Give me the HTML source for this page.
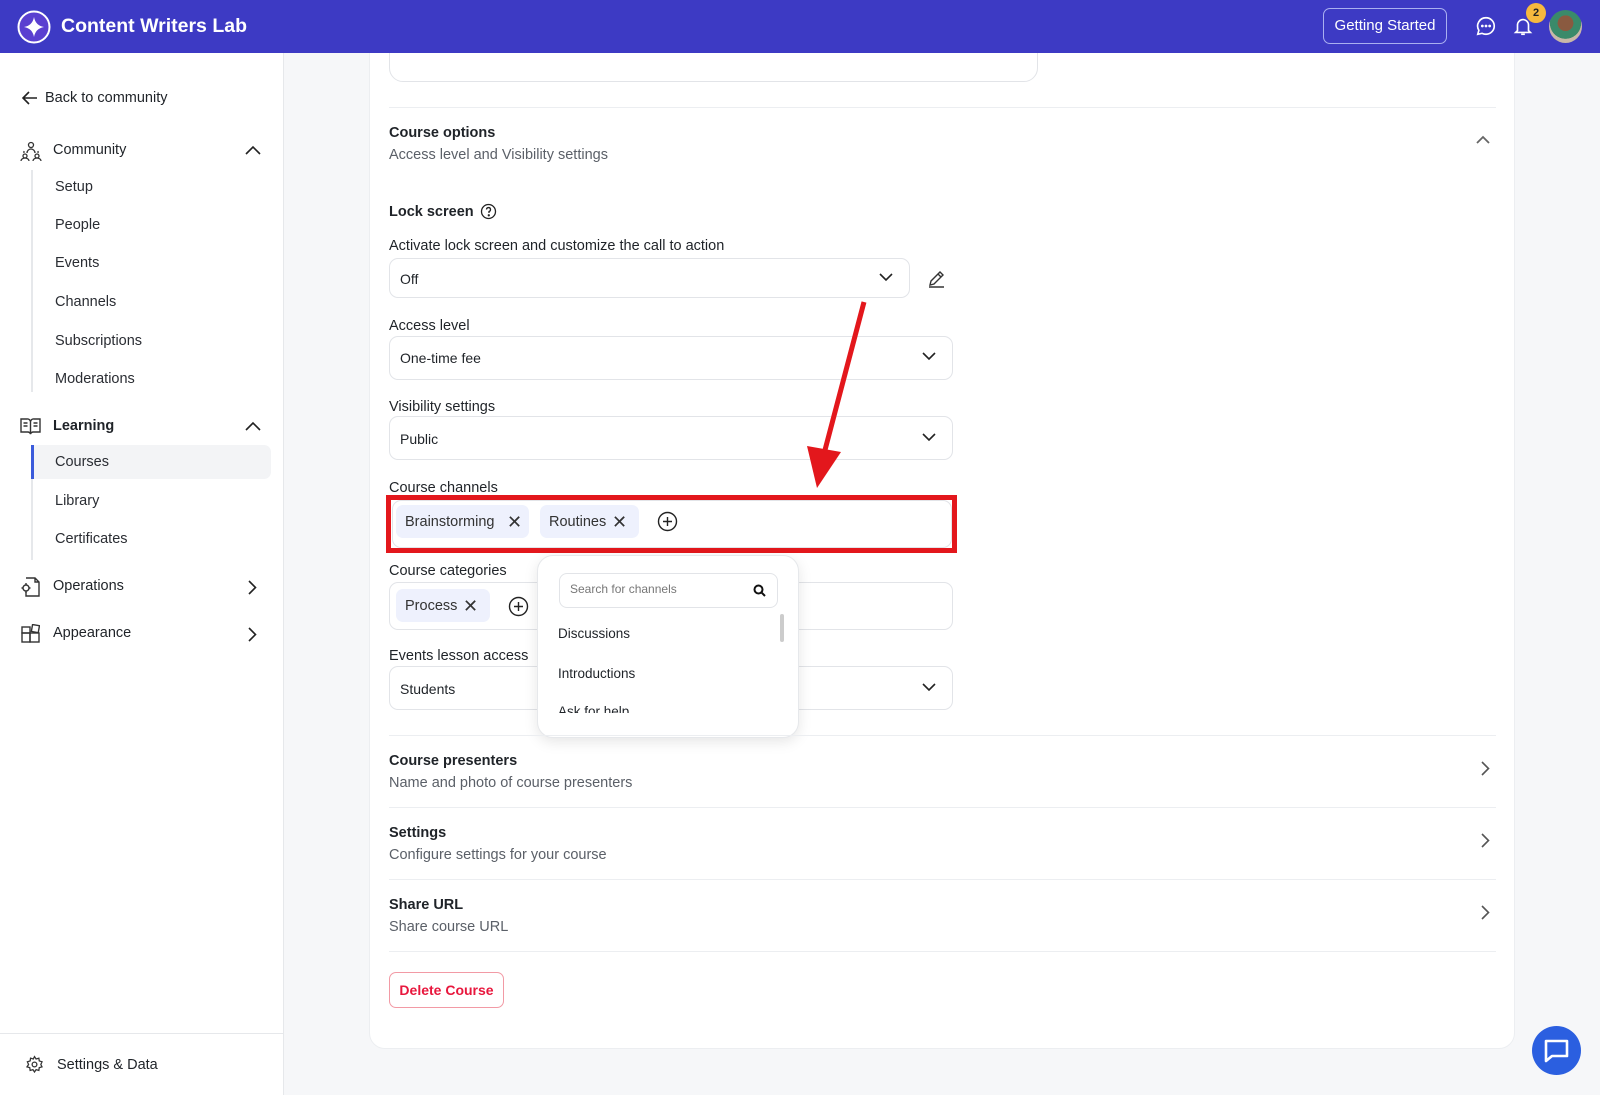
<!DOCTYPE html>
<html><head><meta charset="utf-8"><style>
*{box-sizing:border-box;margin:0;padding:0}
body{width:1600px;height:1095px;overflow:hidden;background:#f6f7f9;font-family:"Liberation Sans",sans-serif;color:#1f2328;font-size:14.5px;position:relative}
.abs{position:absolute}
.hdrwrap{position:absolute;left:0;top:0;width:1600px;height:53px;z-index:10;background:#3d3ac4}
.side{left:0;top:53px;width:284px;height:1042px;background:#fff;border-right:1px solid #e6e8eb}
.card{left:369px;top:30px;width:1146px;height:1019px;background:#fff;border:1px solid #eceef1;border-radius:16px}
.t{position:absolute;white-space:nowrap}
.sub{color:#5b6068}
.b{font-weight:bold}
.sel{position:absolute;border:1px solid #e2e4e8;border-radius:9px;background:#fff}
.hr{position:absolute;left:389px;width:1107px;height:1px;background:#eceef1}
.chip{position:absolute;background:#eef1fd;border-radius:7px;height:33px;line-height:33px;padding-left:9px;font-size:14.5px;color:#333}
.nav{position:absolute;left:55px;color:#2a2d33}
</style></head><body>
<div class="abs side"></div>
<svg class="abs" style="left:21px;top:90px" width="17" height="16" viewBox="0 0 17 16" fill="none" stroke="#222" stroke-width="1.6"><path d="M16 8H2M8 2L2 8l6 6"/></svg>
<div class="t" style="left:45px;top:90px">Back to community</div>
<svg class="abs" style="left:20px;top:140px" width="22" height="22" viewBox="0 0 22 22" fill="none" stroke="#333" stroke-width="1.3"><circle cx="11" cy="5" r="2.5"/><path d="M7 13a4 4 0 0 1 8 0"/><circle cx="5" cy="16" r="2"/><circle cx="17" cy="16" r="2"/><path d="M1 21a4 3 0 0 1 8 0M13 21a4 3 0 0 1 8 0M4 11a7 7 0 0 0 0 2M18 11a7 7 0 0 1 0 2"/></svg>
<div class="t" style="left:53px;top:142px">Community</div>
<svg class="abs" style="left:245px;top:145px" width="16" height="10" viewBox="0 0 16 10" fill="none" stroke="#222" stroke-width="1.6"><path d="M1 9l7-7 7 7"/></svg>
<div class="abs" style="left:31px;top:170px;width:2px;height:222px;background:#e6e8eb"></div>
<div class="nav t" style="top:179px">Setup</div>
<div class="nav t" style="top:217px">People</div>
<div class="nav t" style="top:255px">Events</div>
<div class="nav t" style="top:294px">Channels</div>
<div class="nav t" style="top:333px">Subscriptions</div>
<div class="nav t" style="top:371px">Moderations</div>
<svg class="abs" style="left:20px;top:417px" width="21" height="18" viewBox="0 0 21 18" fill="none" stroke="#333" stroke-width="1.4"><path d="M1 2h6a3 3 0 0 1 3.5 3v12a3 3 0 0 0-3-2H1zM20 2h-6a3 3 0 0 0-3.5 3v12a3 3 0 0 1 3-2H20z"/><path d="M3.5 6h4M3.5 9h4M13.5 6h4M13.5 9h4"/></svg>
<div class="t b" style="left:53px;top:418px">Learning</div>
<svg class="abs" style="left:245px;top:421px" width="16" height="10" viewBox="0 0 16 10" fill="none" stroke="#222" stroke-width="1.6"><path d="M1 9l7-7 7 7"/></svg>
<div class="abs" style="left:31px;top:445px;width:2px;height:115px;background:#e6e8eb"></div>
<div class="abs" style="left:31px;top:445px;width:240px;height:34px;background:#f3f4f6;border-radius:0 7px 7px 0;border-left:3px solid #3b5bdb"></div>
<div class="nav t" style="top:454px">Courses</div>
<div class="nav t" style="top:493px">Library</div>
<div class="nav t" style="top:531px">Certificates</div>
<svg class="abs" style="left:21px;top:577px" width="19" height="20" viewBox="0 0 19 20" fill="none" stroke="#333" stroke-width="1.4"><path d="M5 1h9l4 4v14H5v-4M14 1v4h4"/><circle cx="5" cy="11" r="3"/><path d="M5 6v1.5M5 14.5V16M0.5 11H2M8 11h1.5"/></svg>
<div class="t" style="left:53px;top:578px">Operations</div>
<svg class="abs" style="left:248px;top:580px" width="9" height="15" viewBox="0 0 9 15" fill="none" stroke="#222" stroke-width="1.6"><path d="M1 1l6.5 6.5L1 14"/></svg>
<svg class="abs" style="left:21px;top:624px" width="19" height="19" viewBox="0 0 19 19" fill="none" stroke="#333" stroke-width="1.4"><rect x="1" y="9" width="8" height="9"/><rect x="9" y="9" width="9" height="9"/><rect x="1" y="3" width="8" height="6"/><rect x="11" y="1" width="7" height="7" transform="rotate(10 14 4)"/></svg>
<div class="t" style="left:53px;top:625px">Appearance</div>
<svg class="abs" style="left:248px;top:627px" width="9" height="15" viewBox="0 0 9 15" fill="none" stroke="#222" stroke-width="1.6"><path d="M1 1l6.5 6.5L1 14"/></svg>
<div class="abs" style="left:0;top:1033px;width:284px;height:1px;background:#e6e8eb"></div>
<svg class="abs" style="left:25px;top:1055px" width="19" height="19" viewBox="0 0 24 24" fill="none" stroke="#333" stroke-width="1.6"><circle cx="12" cy="12" r="3"/><path d="M12 2l2 3 3.5-1 .5 3.5 3.5 1-1.5 3.5 1.5 3-3.5 1-.5 3.5-3.5-1-2 3-2-3-3.5 1-.5-3.5-3.5-1L4.5 12 3 8.5l3.5-1L7 4l3.5 1z"/></svg>
<div class="t" style="left:57px;top:1057px">Settings &amp; Data</div>

<div class="abs card"></div>
<div class="sel" style="left:389px;top:20px;width:649px;height:62px;border-radius:14px"></div>
<div class="hr" style="top:107px"></div>
<div class="t b" style="left:389px;top:125px;font-size:14.5px">Course options</div>
<div class="t sub" style="left:389px;top:147px">Access level and Visibility settings</div>
<svg class="abs" style="left:1476px;top:135px" width="14" height="9" viewBox="0 0 14 9" fill="none" stroke="#666" stroke-width="1.8"><path d="M1 8l6-6 6 6"/></svg>
<div class="t b" style="left:389px;top:204px">Lock screen</div>
<svg class="abs" style="left:480px;top:203px" width="17" height="17" viewBox="0 0 17 17" fill="none" stroke="#222" stroke-width="1.3"><circle cx="8.5" cy="8.5" r="7"/><path d="M6.5 6.5a2 2 0 1 1 2.5 2v1.5"/><circle cx="8.8" cy="12.3" r=".5" fill="#222"/></svg>
<div class="t" style="left:389px;top:238px">Activate lock screen and customize the call to action</div>
<div class="sel" style="left:389px;top:258px;width:521px;height:40px"></div>
<div class="t" style="left:400px;top:271px;font-size:14px">Off</div>
<svg class="abs" style="left:879px;top:273px" width="14" height="9" viewBox="0 0 14 9" fill="none" stroke="#222" stroke-width="1.6"><path d="M1 1l6 6 6-6"/></svg>
<svg class="abs" style="left:927px;top:269px" width="19" height="19" viewBox="0 0 19 19" fill="none" stroke="#333" stroke-width="1.4"><path d="M3 16l1-4L13 3l3 3-9 9zM11 5l3 3M2 18h15"/></svg>
<div class="t" style="left:389px;top:318px">Access level</div>
<div class="sel" style="left:389px;top:336px;width:564px;height:44px"></div>
<div class="t" style="left:400px;top:350px;font-size:14px">One-time fee</div>
<svg class="abs" style="left:922px;top:352px" width="14" height="9" viewBox="0 0 14 9" fill="none" stroke="#222" stroke-width="1.6"><path d="M1 1l6 6 6-6"/></svg>
<div class="t" style="left:389px;top:399px">Visibility settings</div>
<div class="sel" style="left:389px;top:416px;width:564px;height:44px"></div>
<div class="t" style="left:400px;top:431px;font-size:14px">Public</div>
<svg class="abs" style="left:922px;top:433px" width="14" height="9" viewBox="0 0 14 9" fill="none" stroke="#222" stroke-width="1.6"><path d="M1 1l6 6 6-6"/></svg>
<div class="t" style="left:389px;top:480px">Course channels</div>
<div class="sel" style="left:392px;top:500px;width:560px;height:48px"></div>
<div class="abs" style="left:386px;top:495px;width:571px;height:58px;border:5px solid #e3171c"></div>
<div class="chip" style="left:396px;top:505px;width:133px;line-height:35px">Brainstorming<span style="position:absolute;left:111px;top:0;font-size:18px">✕</span></div>
<div class="chip" style="left:540px;top:505px;width:99px;line-height:35px">Routines<span style="position:absolute;left:72px;top:0;font-size:18px">✕</span></div>
<svg class="abs" style="left:657px;top:511px" width="21" height="21" viewBox="0 0 21 21" fill="none" stroke="#222" stroke-width="1.4"><circle cx="10.5" cy="10.5" r="9"/><path d="M10.5 6v9M6 10.5h9"/></svg>
<div class="t" style="left:389px;top:563px">Course categories</div>
<div class="sel" style="left:389px;top:582px;width:564px;height:48px"></div>
<div class="chip" style="left:396px;top:589px;width:94px;line-height:35px">Process<span style="position:absolute;left:67px;top:0;font-size:18px">✕</span></div>
<svg class="abs" style="left:508px;top:596px" width="21" height="21" viewBox="0 0 21 21" fill="none" stroke="#222" stroke-width="1.4"><circle cx="10.5" cy="10.5" r="9"/><path d="M10.5 6v9M6 10.5h9"/></svg>
<div class="t" style="left:389px;top:648px">Events lesson access</div>
<div class="sel" style="left:389px;top:666px;width:564px;height:44px"></div>
<div class="t" style="left:400px;top:681px;font-size:14px">Students</div>
<svg class="abs" style="left:922px;top:683px" width="14" height="9" viewBox="0 0 14 9" fill="none" stroke="#222" stroke-width="1.6"><path d="M1 1l6 6 6-6"/></svg>

<div class="abs" style="left:537px;top:555px;width:262px;height:183px;background:#fff;border:1px solid #e6e8eb;border-radius:16px;box-shadow:0 4px 14px rgba(0,0,0,.1);overflow:hidden">
<div class="abs" style="left:21px;top:17px;width:219px;height:35px;border:1px solid #e2e4e8;border-radius:8px"></div>
<div class="t" style="left:32px;top:26px;font-size:12px;color:#777">Search for channels</div>
<svg class="abs" style="left:215px;top:28px" width="13" height="13" viewBox="0 0 13 13" fill="none" stroke="#111" stroke-width="2"><circle cx="5.5" cy="5.5" r="4"/><path d="M8.5 8.5l3.5 3.5"/></svg>
<div class="abs" style="left:242px;top:58px;width:4px;height:28px;background:#ccc;border-radius:2px"></div>
<div class="t" style="left:20px;top:70px;font-size:13.5px">Discussions</div>
<div class="t" style="left:20px;top:110px;font-size:13.5px">Introductions</div>
<div class="abs" style="left:0;top:148px;width:240px;height:9px;overflow:hidden"><div class="t" style="left:20px;top:0;font-size:13.5px">Ask for help</div></div>
</div>

<svg class="abs" style="left:800px;top:295px" width="80" height="200" viewBox="800 295 80 200"><path d="M864 302L825 450" stroke="#e3171c" stroke-width="5"/><path d="M807 446L817 488L841 452z" fill="#e3171c"/></svg>

<div class="hr" style="top:735px"></div>
<div class="t b" style="left:389px;top:753px">Course presenters</div>
<div class="t sub" style="left:389px;top:775px">Name and photo of course presenters</div>
<svg class="abs" style="left:1481px;top:761px" width="9" height="15" viewBox="0 0 9 15" fill="none" stroke="#555" stroke-width="1.6"><path d="M1 1l6.5 6.5L1 14"/></svg>
<div class="hr" style="top:807px"></div>
<div class="t b" style="left:389px;top:825px">Settings</div>
<div class="t sub" style="left:389px;top:847px">Configure settings for your course</div>
<svg class="abs" style="left:1481px;top:833px" width="9" height="15" viewBox="0 0 9 15" fill="none" stroke="#555" stroke-width="1.6"><path d="M1 1l6.5 6.5L1 14"/></svg>
<div class="hr" style="top:879px"></div>
<div class="t b" style="left:389px;top:897px">Share URL</div>
<div class="t sub" style="left:389px;top:919px">Share course URL</div>
<svg class="abs" style="left:1481px;top:905px" width="9" height="15" viewBox="0 0 9 15" fill="none" stroke="#555" stroke-width="1.6"><path d="M1 1l6.5 6.5L1 14"/></svg>
<div class="hr" style="top:951px"></div>
<div class="abs" style="left:389px;top:972px;width:115px;height:36px;border:1px solid #f29aa5;border-radius:7px;color:#e8173d;font-weight:bold;font-size:14px;text-align:center;line-height:34px">Delete Course</div>

<div class="abs" style="left:1532px;top:1026px;width:49px;height:49px;border-radius:50%;background:#2b5fe0"></div>
<svg class="abs" style="left:1543px;top:1038px" width="27" height="26" viewBox="0 0 27 26" fill="none" stroke="#fff" stroke-width="2.6"><path d="M3 3h21v15H9l-6 5z" stroke-linejoin="round"/></svg>

<div class="hdrwrap">
<svg class="abs" style="left:17px;top:10px" width="34" height="34" viewBox="0 0 34 34"><circle cx="17" cy="17" r="15.5" fill="#5a3fd0" stroke="#fff" stroke-width="2"/><path d="M17 7 Q18.5 15.5 27 17 Q18.5 18.5 17 27 Q15.5 18.5 7 17 Q15.5 15.5 17 7Z" fill="#fff"/></svg>
<div class="t b" style="left:61px;top:15px;color:#fff;font-size:19.5px">Content Writers Lab</div>
<div class="abs" style="left:1323px;top:8px;width:124px;height:36px;border:1px solid #aab0f0;border-radius:7px;color:#fff;font-size:15px;text-align:center;line-height:34px">Getting Started</div>
<svg class="abs" style="left:1475px;top:15px" width="22" height="22" viewBox="0 0 24 24" fill="none" stroke="#fff" stroke-width="1.8"><path d="M12 3a9 9 0 0 1 0 18c-1.5 0-3-.4-4.3-1L3 21l1.2-4.3A9 9 0 0 1 12 3z"/><circle cx="8" cy="12" r=".6" fill="#fff"/><circle cx="12" cy="12" r=".6" fill="#fff"/><circle cx="16" cy="12" r=".6" fill="#fff"/></svg>
<svg class="abs" style="left:1512px;top:14px" width="22" height="24" viewBox="0 0 24 24" fill="none" stroke="#fff" stroke-width="1.8"><path d="M6 17V11a6 6 0 0 1 12 0v6l2 2H4z"/><path d="M10 21h4"/></svg>
<div class="abs" style="left:1526px;top:3px;width:20px;height:20px;border-radius:50%;background:#f7b93e;font-size:11px;font-weight:bold;text-align:center;line-height:20px;color:#222">2</div>
<div class="abs" style="left:1549px;top:10px;width:33px;height:33px;border-radius:50%;background:radial-gradient(circle at 50% 40%,#8a5a40 0 30%,#3a8a6a 31% 60%,#c9b8a8 61%)"></div>
</div>
</body></html>
